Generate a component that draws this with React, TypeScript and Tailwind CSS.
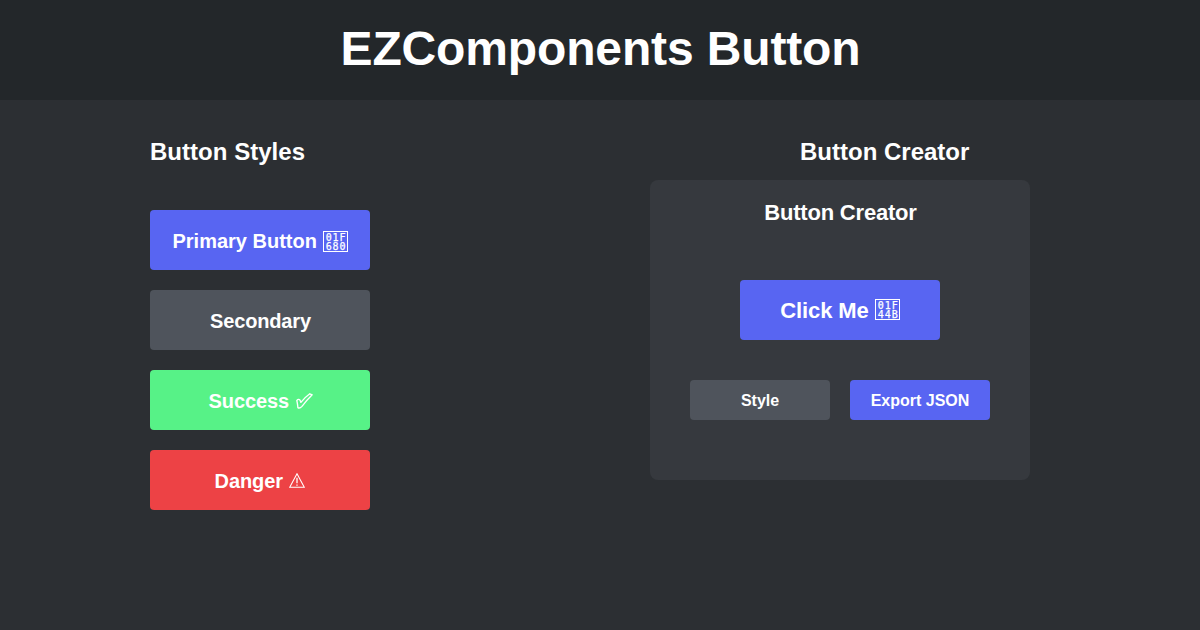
import React from 'react';

const btn = 'flex h-[60px] w-[220px] items-center justify-center whitespace-pre rounded pt-0.5 text-xl font-bold text-white';

function HexBox({ top, bottom, className }: { top: string; bottom: string; className: string }) {
  return (
    <span className={`flex h-[21px] flex-col items-center justify-center border border-white pl-[2px] pt-px font-['DejaVu_Sans_Mono',monospace] text-[10px] font-normal leading-[9px] tracking-[0.9px] [-webkit-text-stroke:0.25px_white] ${className}`}>
      <span>{top}</span>
      <span>{bottom}</span>
    </span>
  );
}

function Check() {
  return (
    <svg className="ml-0.5 h-[17px] w-[17px]" viewBox="0 0 17 17" fill="none" stroke="white" strokeWidth="1.35" strokeLinejoin="round">
      <path d="M.8 7.4Q2.6 5.6 4 7.1L4.9 9.4Q8.9 4.3 13.8.8L16.2 1.8Q10.9 7 6 13.4Q3.6 15.9 1.9 14.6Q1.6 11 .8 7.4Z" />
    </svg>
  );
}

function Warning() {
  return (
    <svg className="ml-px h-[15px] w-[16px] -translate-y-px" viewBox="0 0 16 15" fill="none" stroke="white" strokeWidth="1.1">
      <path d="M8 .8 15.3 14.3H.7Z" />
      <path d="M8 4.8V10.2M8 11.4V12.8" strokeWidth="1.3" />
    </svg>
  );
}

export default function App() {
  return (
    <div className="flex h-[630px] w-[1200px] flex-col overflow-hidden bg-[#2c2f33] font-['Liberation_Sans',Arial,sans-serif] font-bold text-white">
      <header className="flex h-[100px] items-center justify-center bg-[#23272a] pb-0.5 pl-px">
        <h1 className="text-[48px] leading-none tracking-[-0.14px]">EZComponents Button</h1>
      </header>
      <main className="flex justify-between pl-[150px] pr-[170px] pt-[36px]">
        <section className="w-[220px]">
          <h2 className="h-[74px] text-2xl tracking-[0.03px]">Button Styles</h2>
          <div className="flex flex-col gap-5">
            <button className={`${btn} bg-[#5865f2]`}>Primary Button <HexBox top="01F" bottom="680" className="w-[25px]" /></button>
            <button className={`${btn} bg-[#4f545c]`}><span className="pl-px tracking-[-0.15px]">Secondary</span></button>
            <button className={`${btn} bg-[#57f287]`}><span className="pl-0.5 tracking-[-0.1px]">Success </span><Check /></button>
            <button className={`${btn} bg-[#ed4245]`}><span className="tracking-[-0.1px]">Danger </span><Warning /></button>
          </div>
        </section>
        <section className="w-[380px]">
          <h2 className="h-[44px] pl-[150px] text-2xl">Button Creator</h2>
          <div className="flex h-[300px] flex-col items-center rounded-lg bg-[#36393e] pt-[19px]">
            <h3 className="h-[81px] pl-px text-[22px] leading-7 tracking-[-0.2px]">Button Creator</h3>
            <button className="flex h-[60px] w-[200px] items-center justify-center whitespace-pre rounded bg-[#5865f2] text-[22px] tracking-[-0.1px]">Click Me <HexBox top="01F" bottom="44B" className="w-[25px] -translate-y-px" /></button>
            <div className="mt-10 flex gap-5">
              <button className="h-10 w-[140px] rounded bg-[#4f545c] pt-0.5 text-base">Style</button>
              <button className="h-10 w-[140px] rounded bg-[#5865f2] pt-0.5 text-base">Export JSON</button>
            </div>
          </div>
        </section>
      </main>
    </div>
  );
}
